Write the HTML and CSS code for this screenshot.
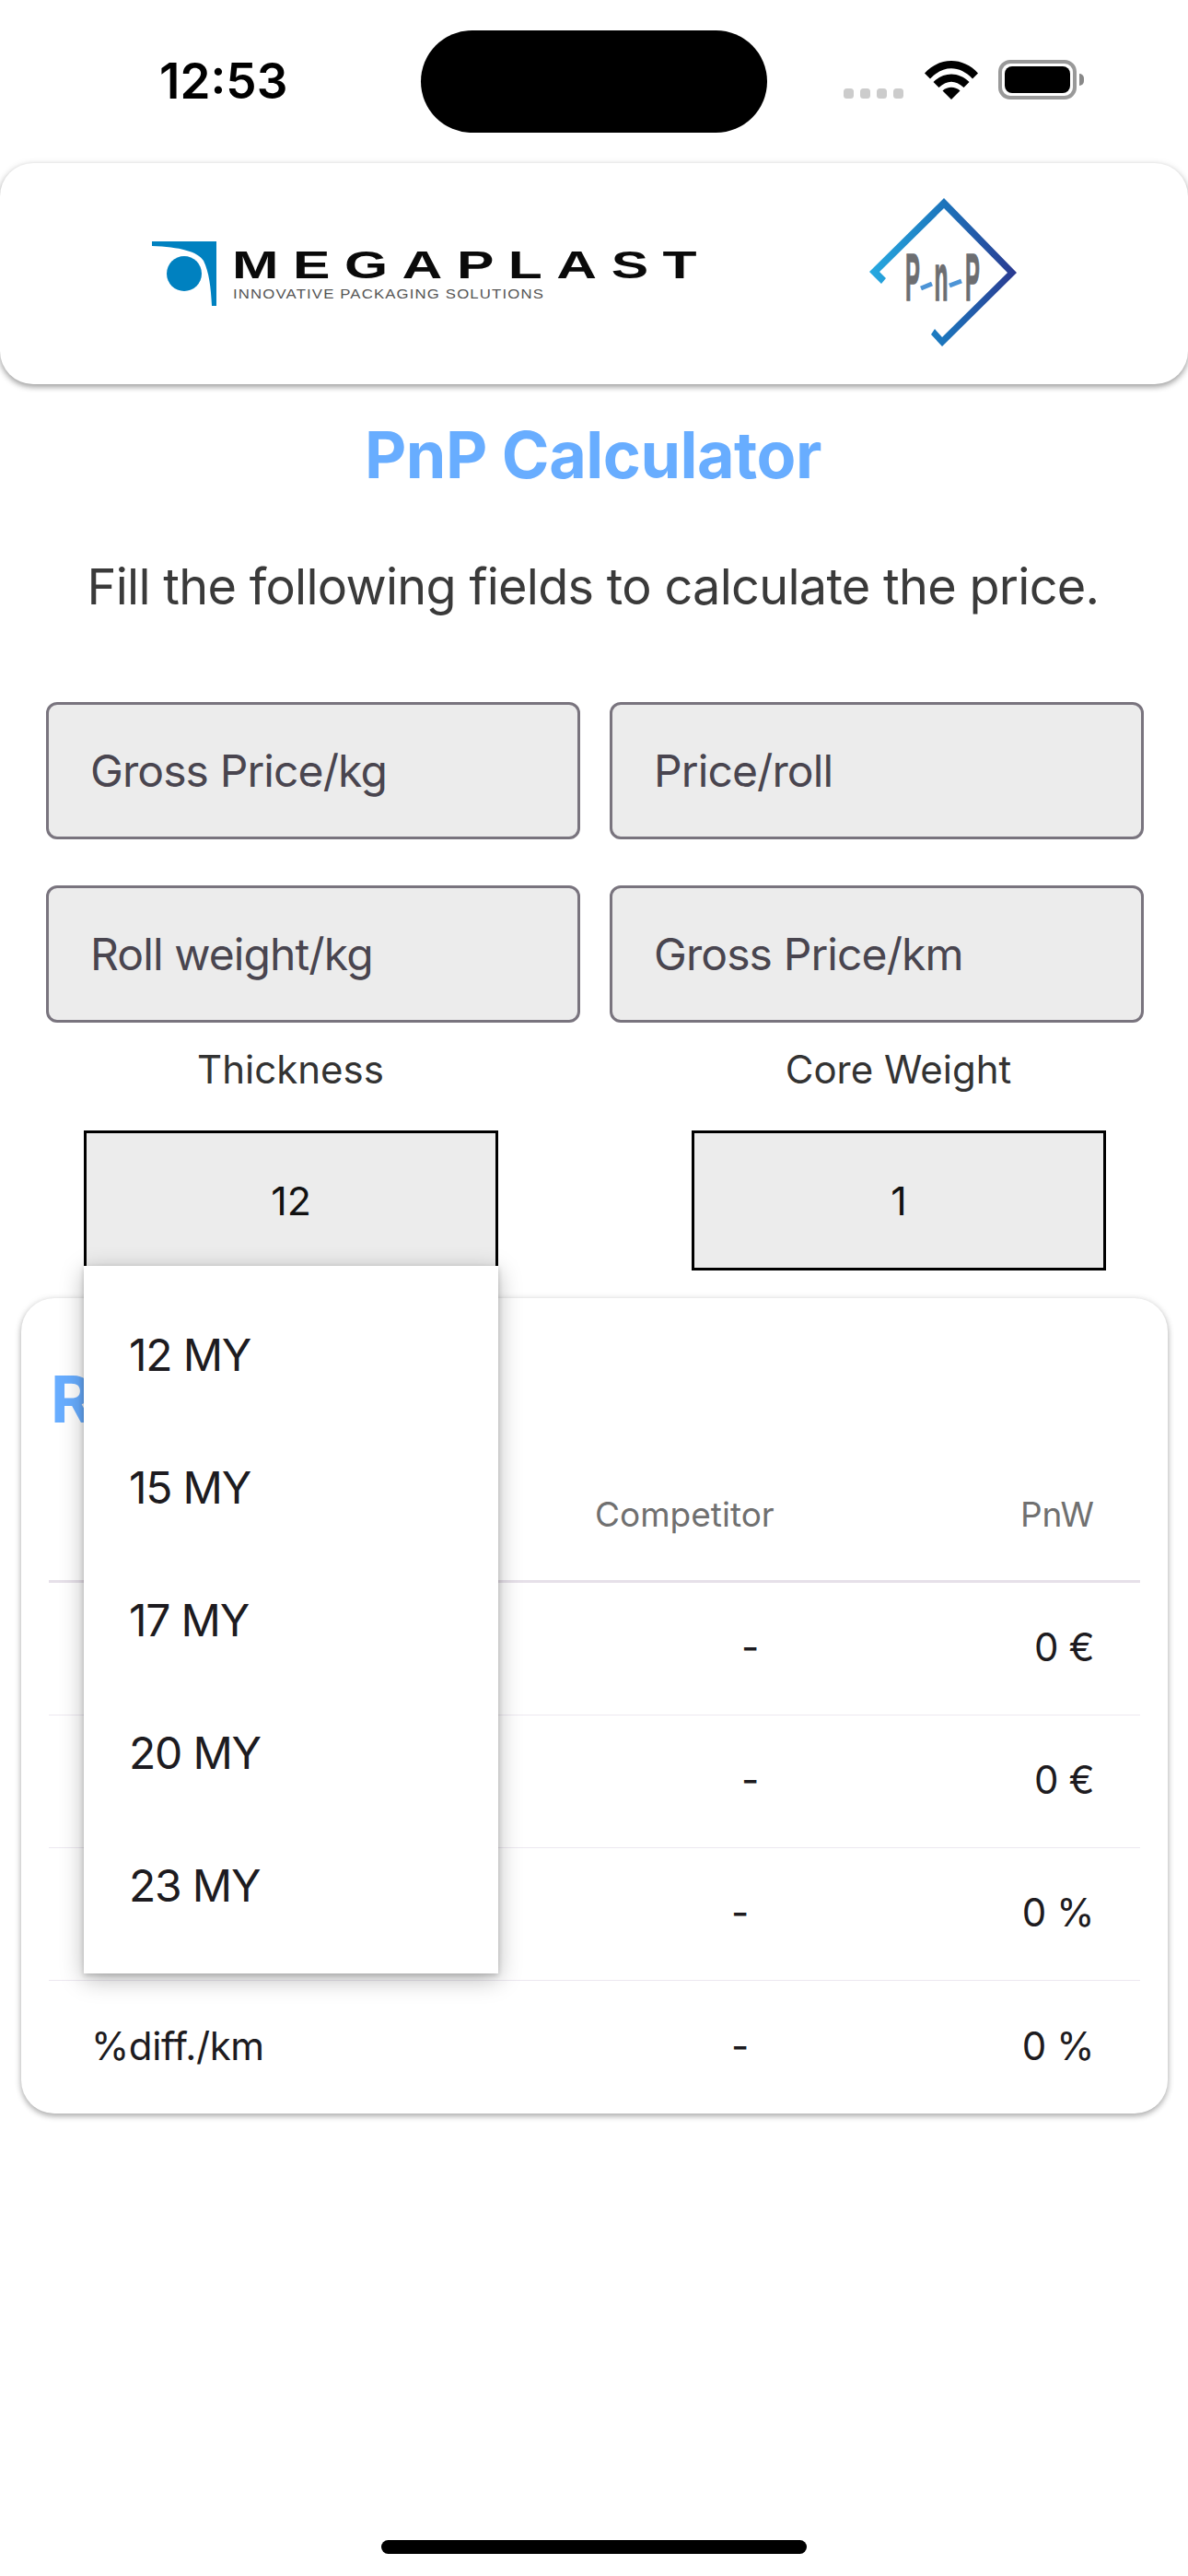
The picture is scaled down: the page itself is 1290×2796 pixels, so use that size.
FILE: index.html
```html
<!DOCTYPE html>
<html lang="en">
<head>
<meta charset="utf-8">
<title>PnP Calculator</title>
<link rel="stylesheet" href="styles.css">
</head>
<body>
<div class="screen">
  <div class="statusbar">
    <span class="time">12:53</span>
    <div class="island"></div>
    <div class="status-right">
      <div class="dots"><i></i><i></i><i></i><i></i></div>
      <svg class="wifi" viewBox="0 0 58 42"><path d="M0 13.500C16-4.500 42-4.500 58 13.500L52 19.500C38 4.500 20 4.500 6 19.500Z"/><path d="M9.500 23C21 11.500 37 11.500 48.500 23L42.500 29C33 20.500 25 20.500 15.500 29Z"/><path d="M19.500 32.500C25 27.500 33 27.500 38.500 32.500L29 42Z"/></svg>
      <div class="battery"><div class="battery-fill"></div></div>
      <div class="battery-nub"></div>
    </div>
  </div>

  <header class="brand">
    <svg class="logo-mega" viewBox="0 0 630 80">
      <path class="mega-blue" d="M0 0H70V70H65C64 50 62 33 56 21C50 11 30 6 0 5Z"/>
      <ellipse class="mega-blue" cx="35" cy="35" rx="19" ry="19"/>
      <text class="mega-word" transform="translate(87 40) scale(1.41 1)">MEGAPLAST</text>
      <text class="mega-tag" x="88" y="62" textLength="338" lengthAdjust="spacingAndGlyphs">INNOVATIVE PACKAGING SOLUTIONS</text>
    </svg>
    <svg class="logo-pnp" viewBox="0 0 164 164">
      <defs><linearGradient id="pnpGrad" x1="0" x2="1" y1="0" y2="0"><stop offset="0" stop-color="#27aae1"/><stop offset=".5" stop-color="#1c75bc"/><stop offset="1" stop-color="#2b3990"/></linearGradient></defs>
      <path fill="url(#pnpGrad)" d="M0 80 81 0 160 81 79 161 67 148 71 142 79 151 150 81 81 11 11 80 18 87 13 93Z"/>
      <text class="pnp-letter" transform="translate(39 110.500) scale(.33 1)">P</text>
      <text class="pnp-letter" transform="translate(70.500 110.500) scale(.34 1)">n</text>
      <text class="pnp-letter" transform="translate(104 110.500) scale(.33 1)">P</text>
      <path class="pnp-dash" d="M56 98 68 93M87 95 100 90"/>
    </svg>
  </header>

  <h1 class="title">PnP Calculator</h1>
  <p class="subtitle">Fill the following fields to calculate the price.</p>

  <div class="fields">
    <div class="field">Gross Price/kg</div>
    <div class="field">Price/roll</div>
    <div class="field">Roll weight/kg</div>
    <div class="field">Gross Price/km</div>
  </div>

  <div class="selectors">
    <div class="selector">
      <div class="selector-label">Thickness</div>
      <div class="selector-box">12</div>
      <div class="menu">
        <div class="menu-item">12 MY</div>
        <div class="menu-item">15 MY</div>
        <div class="menu-item">17 MY</div>
        <div class="menu-item">20 MY</div>
        <div class="menu-item">23 MY</div>
      </div>
    </div>
    <div class="selector">
      <div class="selector-label">Core Weight</div>
      <div class="selector-box">1</div>
    </div>
  </div>

  <section class="card">
    <h2 class="card-title">Results</h2>
    <div class="table">
      <div class="row row-head"><span></span><span class="col-comp">Competitor</span><span class="col-val">PnW</span></div>
      <div class="row"><span></span><span class="col-comp dash">-</span><span class="col-val">0 €</span></div>
      <div class="row"><span></span><span class="col-comp dash">-</span><span class="col-val">0 €</span></div>
      <div class="row"><span></span><span class="col-comp dash dash-pct">-</span><span class="col-val">0 %</span></div>
      <div class="row"><span>%diff./km</span><span class="col-comp dash dash-pct">-</span><span class="col-val">0 %</span></div>
    </div>
  </section>

  <div class="home-indicator"></div>
</div>
</body>
</html>
```
FILE: styles.css
```css
* { box-sizing: border-box; }
html, body { margin: 0; padding: 0; background: #fff; }
body { font-family: "Inter", "Liberation Sans", sans-serif; }
.screen { position: relative; width: 1290px; height: 2796px; overflow: hidden; background: #fff; padding-top: 33px; }

.statusbar { height: 111px; display: flex; align-items: center; position: relative; padding-left: 173px; }
.time { font-size: 53px; font-weight: 600; color: #000; width: 284px; line-height: 1; }
.island { width: 376px; height: 111px; border-radius: 56px; background: #000; }
.status-right { display: flex; align-items: flex-end; height: 43px; margin-left: 83px; position: relative; top: -2px; }
.dots { display: flex; gap: 7px; margin-bottom: 1px; }
.dots i { width: 11px; height: 11px; border-radius: 3.500px; background: #ccc; display: block; }
.wifi { width: 58px; height: 42px; margin-left: 23px; fill: #000; }
.battery { width: 85px; height: 43px; border: 4px solid #999; border-radius: 13px; padding: 3px; margin-left: 22px; }
.battery-fill { width: 100%; height: 100%; background: #000; border-radius: 8px; }
.battery-nub { width: 5px; height: 13px; background: #888; border-radius: 0 5px 5px 0; margin: 0 0 15px 3px; }

.brand { margin-top: 33px; height: 240px; border-radius: 36px; background: #fff; box-shadow: 0 3px 6px rgba(0,0,0,.35), 0 1px 10px rgba(0,0,0,.08); display: flex; align-items: flex-start; position: relative; }
.logo-mega { width: 630px; height: 80px; margin: 85px 0 0 165px; }
.mega-blue { fill: #0081c0; }
.mega-word { font-family: "Liberation Sans", sans-serif; font-size: 43px; font-weight: 700; letter-spacing: 11px; fill: #0a0a0a; }
.mega-tag { font-family: "Liberation Sans", sans-serif; font-size: 14.500px; letter-spacing: 1px; fill: #555; }
.logo-pnp { width: 164px; height: 164px; margin: 38px 0 0 149px; }
.pnp-letter { font-family: "Liberation Sans", sans-serif; font-size: 72px; font-weight: 700; fill: #6d6e71; stroke: #6d6e71; stroke-width: 1.500; }
.pnp-dash { fill: none; stroke: #4d94d6; stroke-width: 5; }

.title { margin: 37px 0 0; text-align: center; font-size: 70px; line-height: 80px; font-weight: 700; letter-spacing: -.5px; color: #68adff; padding-right: 2px; }
.subtitle { margin: 73px 0 0; text-align: center; font-size: 54px; line-height: 60px; font-weight: 400; letter-spacing: -.71px; color: #3a3a3a; padding-right: 2px; }

.fields { display: grid; grid-template-columns: 580px 580px; gap: 50px 32px; margin: 95px 0 0 50px; }
.field { height: 149px; border: 3px solid #79747e; border-radius: 12px; background: #ececec; display: flex; align-items: center; padding: 0 0 0 45px; font-size: 48px; letter-spacing: -.9px; color: #49454f; }

.selectors { display: grid; grid-template-columns: 450px 450px; column-gap: 210px; margin: 24px 0 0 91px; }
.selector { position: relative; }
.selector-label { text-align: center; font-size: 42px; line-height: 54px; color: #333; padding-right: 1px; }
.selector-box { margin-top: 39px; height: 152px; border: 3px solid #000; background: #ececec; display: flex; align-items: center; justify-content: center; font-size: 43px; color: #111; }
.menu { position: absolute; z-index: 2; left: 0; top: 240px; width: 450px; padding: 24px 0; background: #fff; box-shadow: 0 6px 24px rgba(0,0,0,.28), 0 2px 6px rgba(0,0,0,.2); }
.menu-item { height: 144px; display: flex; align-items: center; padding-left: 49px; font-size: 48px; letter-spacing: -1.200px; color: #1d1b20; }

.card { position: relative; margin: 30px 22px 0 23px; height: 885px; border-radius: 36px; background: #fff; box-shadow: 0 3px 6px rgba(0,0,0,.3), 0 0 8px rgba(0,0,0,.08); padding: 70px 30px 0; }
.card-title { margin: 0; font-size: 70px; line-height: 80px; font-weight: 700; color: #68adff; padding-left: 2px; }
.table { margin-top: 17px; }
.row { display: grid; grid-template-columns: 1fr 194px 348px; align-items: center; height: 144px; border-bottom: 1.500px solid #ece8f0; padding: 0 50px 4px 46px; font-size: 42px; letter-spacing: -.4px; color: #1d1b20; }
.row:last-child { border-bottom: 0; }
.row-head { height: 142px; border-bottom: 3px solid #e6e0e9; font-size: 37px; letter-spacing: 0; color: #707070; }
.col-comp { text-align: left; }
.col-val { text-align: right; }
.dash { text-align: right; padding-right: 16px; }
.dash-pct { padding-right: 27px; }

.home-indicator { position: absolute; left: 414px; bottom: 24px; width: 462px; height: 15px; border-radius: 8px; background: #000; }
```
